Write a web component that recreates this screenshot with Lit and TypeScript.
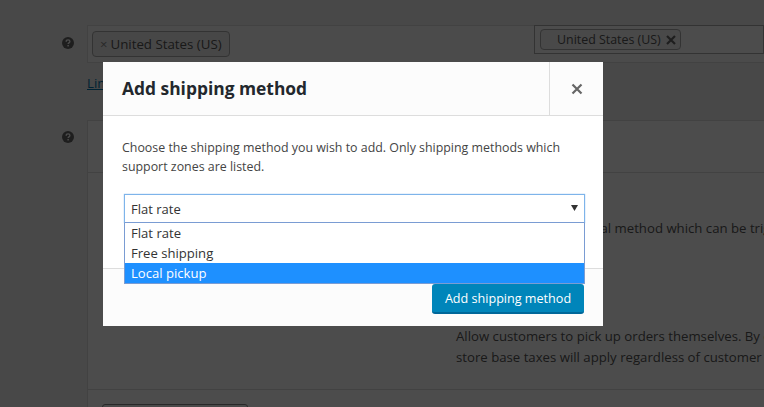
import { LitElement, html, css } from "lit";
import { customElement } from "lit/decorators.js";

const help = html`<svg class="help" viewBox="0 0 14 14" width="12" height="12"><circle cx="7" cy="7" r="7" fill="#666"></circle><path d="M4.9 5.4c0-1.3 1-2 2.2-2s2.1.7 2.1 1.8c0 1.8-2 1.6-2 3.1" fill="none" stroke="#fff" stroke-width="1.6"></path><rect x="6.3" y="9.3" width="1.7" height="1.7" fill="#fff"></rect></svg>`;

@customElement("app-root")
export class AppRoot extends LitElement {
  static styles = css`
    :host { display: block; width: 764px; height: 407px; position: relative; overflow: hidden; font-family: "Open Sans", "Noto Sans", sans-serif; font-size: 13.2px; color: #555; background: #f1f1f1; }
    .page { display: flex; flex-direction: column; padding: 25px 0 0 62px; }
    .row { display: flex; gap: 13px; }
    .help { flex: none; margin-top: 12px; }
    .row-tight .help { margin-top: 11px; }
    .side-help { width: 12px; flex: none; }
    .regions { flex: 1; height: 38px; display: flex; border: 1px solid #ddd; border-right: 0; background: #fafafa; box-sizing: border-box; justify-content: space-between; min-width: 0; }
    .chip { align-self: flex-start; margin: 5px 0 0 4px; height: 26px; box-sizing: border-box; width: 138px; display: flex; align-items: center; gap: 3px; padding-left: 7px; border: 1px solid #aaa; border-radius: 4px; background: #eee; white-space: nowrap; color: #555; font-size: 13.3px; }
    .chip i { font-style: normal; color: #888; font-size: 13px; }
    .select2 { width: 230px; height: 29px; box-sizing: border-box; border: 1px solid #aaa; background: #fff; margin-top: -1px; padding: 3px 0 0 5px; }
    .chip2 { display: flex; align-items: center; width: 141px; height: 21px; box-sizing: border-box; padding-left: 16px; gap: 5px; border: 1px solid #aaa; border-radius: 4px; background: #f4f4f4; white-space: nowrap; font-size: 12.4px; }
    .link { padding: 11px 0 0; height: 57px; box-sizing: border-box; line-height: 18px; white-space: nowrap; }
    .link a { color: #0073aa; text-decoration: underline; }
    .table { flex: 1; border: 1px solid #ddd; border-right: 0; border-bottom: 0; background: #fff; display: flex; flex-direction: column; min-width: 0; }
    .tr { border-bottom: 1px solid #ddd; box-sizing: border-box; flex: none; }
    .tr1 { height: 52px; }
    .tr2 { height: 217px; padding: 45px 0 0 368px; display: flex; flex-direction: column; gap: 87px; white-space: nowrap; line-height: 21px; }
    .free { padding-left: 3px; }
    .tr3 { padding: 14px 0 0 14px; flex: none; }
    .ghost { width: 146px; height: 30px; border: 1px solid #888; border-radius: 3px; background: #f7f7f7; box-sizing: border-box; }
    .backdrop { position: absolute; inset: 0; background: rgba(0,0,0,.7); }
    .modal { position: absolute; left: 103px; top: 62px; width: 500px; height: 264px; background: #fff; display: flex; flex-direction: column; color: #444; }
    header { height: 54px; flex: none; display: flex; box-sizing: border-box; background: #fcfcfc; border-bottom: 1px solid #ddd; }
    h1 { flex: 1; margin: 0; padding-left: 19px; font-size: 17.4px; line-height: 53px; font-weight: 700; color: #23282d; }
    .close { width: 54px; border-left: 1px solid #ddd; box-sizing: border-box; display: flex; align-items: center; justify-content: center; }
    .body { flex: 1; padding: 22px 19px 0; box-sizing: border-box; position: relative; }
    .body p { margin: 0; line-height: 19px; font-size: 12.4px; }
    .select { position: absolute; left: 21px; top: 78px; width: 461px; box-sizing: border-box; }
    .sel-top { height: 29px; box-sizing: border-box; border: 1px solid #7eb4ea; border-bottom-color: #7a9cd3; box-shadow: 0 0 1px #7eb4ea; display: flex; align-items: center; justify-content: space-between; padding: 1px 6px 0 6px; background: #fff; font-size: 13px; color: #333; }
    .arrow { margin-bottom: 3px; }
    .opts { border: 1px solid #7a9cd3; border-top: 0; font-size: 13.1px; color: #333; background: #fff; }
    .opt { height: 20px; line-height: 21px; padding-left: 6px; }
    .opt.on { background: #1e90ff; color: #fff; }
    footer { height: 58px; flex: none; border-top: 1px solid #ddd; background: #fcfcfc; box-sizing: border-box; display: flex; justify-content: flex-end; align-items: flex-start; padding: 15px 19px 0 0; }
    button { width: 152px; height: 30px; font: inherit; font-size: 12.6px; color: #fff; background: #0085ba; border: 1px solid #006799; border-width: 0 0 2px; border-radius: 3px; padding: 0; }
  `;
  render() {
    return html`
      <div class="page">
        <div class="row">
          ${help}
          <div class="regions">
            <div class="chip"><i>×</i>United States (US)</div>
            <div class="select2"><div class="chip2">United States (US)
              <svg width="10" height="10" viewBox="0 0 10 10"><path d="M1 1l8 8M9 1L1 9" stroke="#666" stroke-width="2.2"></path></svg></div></div>
          </div>
        </div>
        <div class="row"><span class="side-help"></span><div class="link"><a href="#">Limit to specific ZIP/postcodes</a></div></div>
        <div class="row row-tight">
          ${help}
          <div class="table">
            <div class="tr tr1"></div>
            <div class="tr tr2">
              <div class="free">Free shipping is a special method which can be triggered with coupons and minimum spends.</div>
              <div>Allow customers to pick up orders themselves. By default, when using local pickup<br>store base taxes will apply regardless of customer address.</div>
            </div>
            <div class="tr3"><div class="ghost"></div></div>
          </div>
        </div>
      </div>
      <div class="backdrop"></div>
      <div class="modal">
        <header>
          <h1>Add shipping method</h1>
          <div class="close"><svg width="12" height="12" viewBox="0 0 12 12"><path d="M1.5 1.5l9 9M10.5 1.5l-9 9" stroke="#666" stroke-width="2.2"></path></svg></div>
        </header>
        <div class="body">
          <p>Choose the shipping method you wish to add. Only shipping methods which<br>support zones are listed.</p>
          <div class="select">
            <div class="sel-top"><span>Flat rate</span><svg class="arrow" width="7" height="6" viewBox="0 0 7 6"><path d="M0 0h7L3.5 6z" fill="#333"></path></svg></div>
            <div class="opts">
              <div class="opt">Flat rate</div>
              <div class="opt">Free shipping</div>
              <div class="opt on">Local pickup</div>
            </div>
          </div>
        </div>
        <footer><button>Add shipping method</button></footer>
      </div>
    `;
  }
}
